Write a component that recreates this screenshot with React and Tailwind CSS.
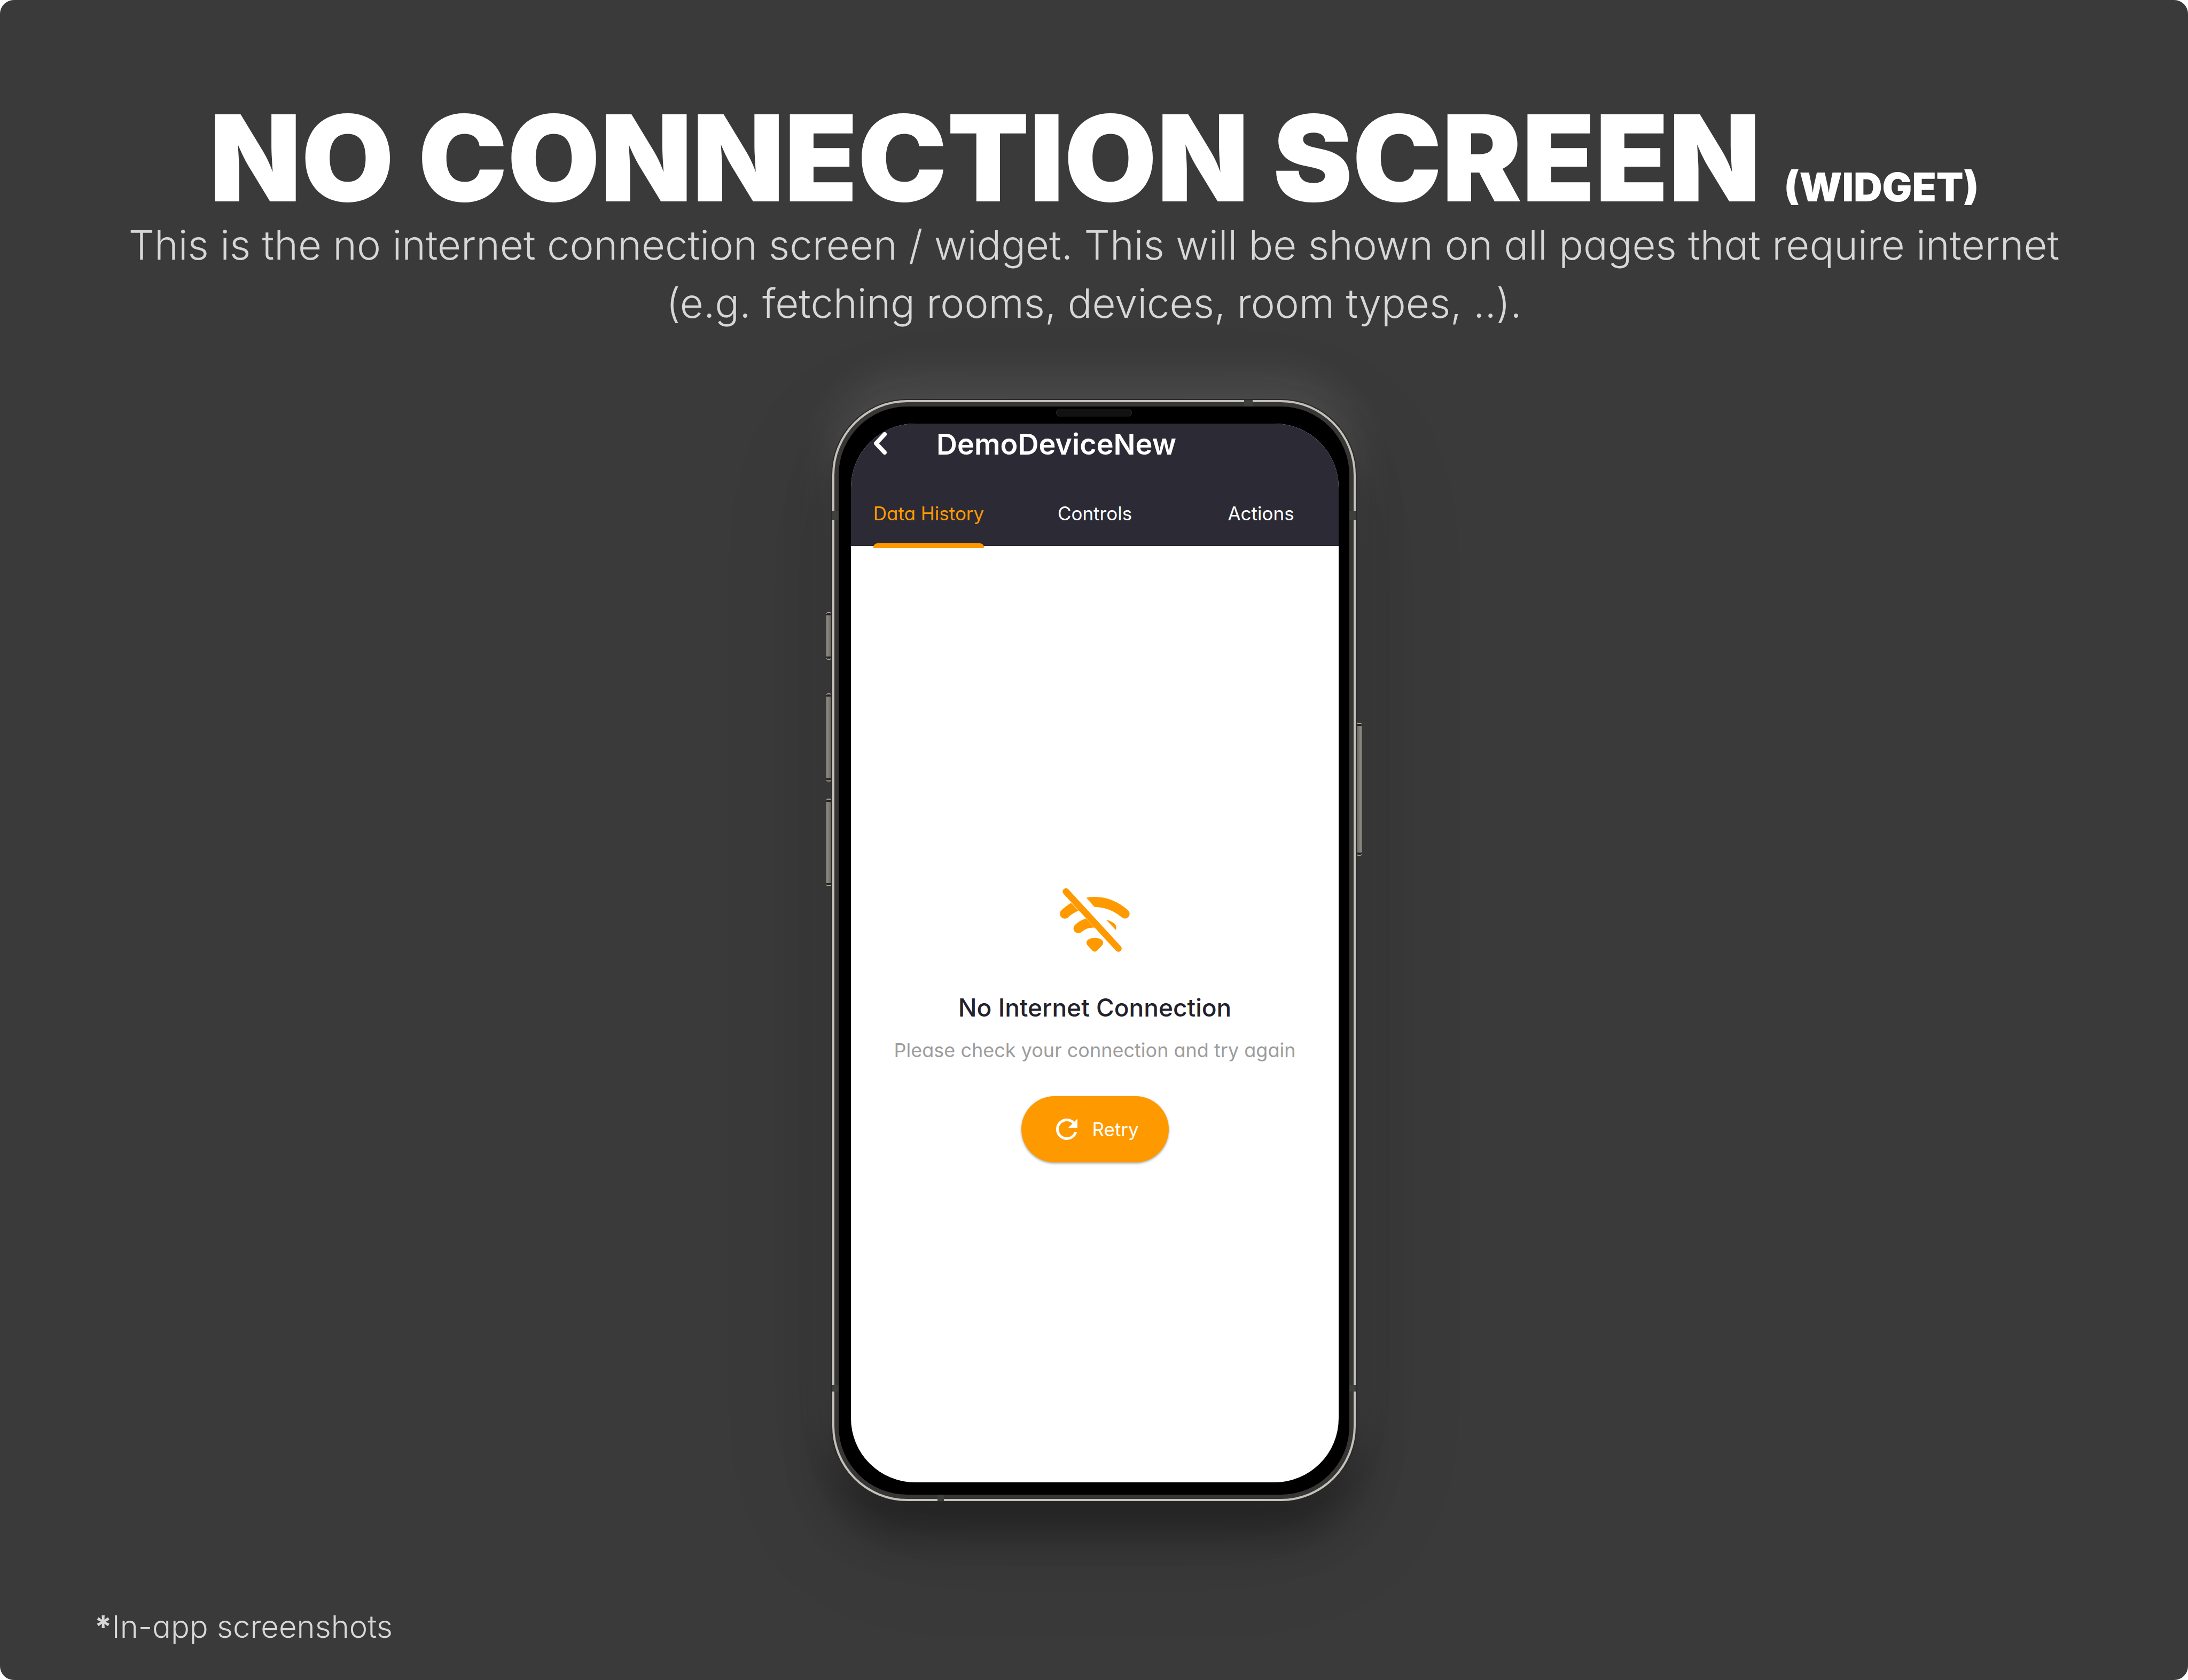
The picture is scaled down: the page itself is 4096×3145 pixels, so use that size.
const SIDE_BUTTONS = [
  { name: "mute", place: "-left-[11px] top-[399px] h-[85px] bg-gradient-to-r" },
  { name: "volume-up", place: "-left-[11px] top-[551px] h-[161px] bg-gradient-to-r" },
  { name: "volume-down", place: "-left-[11px] top-[748px] h-[160px] bg-gradient-to-r" },
  { name: "power", place: "-right-[11px] top-[606px] h-[245px] bg-gradient-to-l" },
];

const ANTENNA_GAPS = [
  { name: "left-top", place: "left-0 top-[208px] h-4 w-3" },
  { name: "right-top", place: "right-0 top-[208px] h-4 w-3" },
  { name: "left-bottom", place: "left-0 bottom-[205px] h-3 w-3" },
  { name: "right-bottom", place: "right-0 bottom-[205px] h-3 w-3" },
  { name: "top", place: "top-0 right-[193px] h-3 w-4" },
  { name: "bottom", place: "bottom-0 left-[197px] h-3 w-3" },
];

const TABS = ["Data History", "Controls", "Actions"];

function WifiOffIcon() {
  return (
    <svg viewBox="237 133 436 399" className="h-[120px] w-[131px]" fill="#ff9900" aria-hidden="true">
      <path d="M275 156L602 511" stroke="#ff9900" strokeWidth="41" strokeLinecap="round" />
      <path d="M308 228Q278 243 248 272A29 29 0 0 0 287 318Q318 289 355 275Z" />
      <path d="M402 194Q547 171 662 273A29 29 0 0 1 623 317Q548 254 453 252Z" />
      <path d="M400 324Q362 335 332 363A29 29 0 0 0 372 408Q405 379 455 381Z" />
      <path d="M525 331Q572 345 584 364Q594 382 585 395Z" />
      <path d="M403 475C404 454 428 445 455 445C482 445 506 454 507 475Q507 485 499 493L469 525Q455 537 441 525L411 493Q403 485 403 475Z" />
    </svg>
  );
}

function RefreshIcon() {
  return (
    <svg viewBox="0 0 24 24" className="size-15" fill="currentColor" aria-hidden="true">
      <path d="M17.65 6.35A7.96 7.96 0 0 0 12 4a8 8 0 1 0 7.73 10h-2.08A6 6 0 1 1 12 6c1.66 0 3.14.69 4.22 1.78L13 11h7V4z" />
    </svg>
  );
}

function Phone({ children }) {
  return (
    <div className="relative mx-auto w-[984px] rounded-[142px] border-2 border-[#2b2a26] bg-[#c2c1bc] p-1 shadow-[0_-40px_80px_rgba(255,255,255,0.1),0_60px_80px_rgba(0,0,0,0.35),0_60px_220px_rgba(0,0,0,0.12)]">
      {SIDE_BUTTONS.map((b) => (
        <span
          key={b.name}
          className={`absolute w-[9px] rounded-[3px] border-y-4 border-[#24231f] from-[#94928b] to-[#66645d] shadow-[0_-2px_0_#a9a8a0,0_2px_0_#a9a8a0] ${b.place}`}
        />
      ))}
      <div className="rounded-[136px] bg-[#373635] p-2">
        <div className="relative rounded-[128px] bg-black pt-8 pr-5 pb-[23px] pl-[23px]">
          <span className="absolute top-1 left-1/2 h-[15px] w-[142px] -translate-x-1/2 rounded-full border-x-2 border-[#242424] bg-[#121212]" />
          <div className="flex h-[1982px] flex-col overflow-hidden rounded-[120px] bg-white">{children}</div>
        </div>
      </div>
      {ANTENNA_GAPS.map((g) => (
        <span key={g.name} className={`absolute bg-[#3f3f3b] ${g.place}`} />
      ))}
    </div>
  );
}

export default function App() {
  return (
    <div className="bg-white">
      <main className="flex min-h-screen flex-col rounded-[26px] bg-[#3a3a3a] px-[177px] pt-[188px] pb-[60px] font-['Inter',sans-serif] text-[#d7d7d7] [font-feature-settings:'cv11']">
        <h1 className="text-center text-[224px] leading-[216px] font-black whitespace-nowrap text-white">
          NO CONNECTION SCREEN<span className="ml-[44px] text-[74px] leading-none">(WIDGET)</span>
        </h1>
        <p className="text-center text-[76px] leading-[109px] font-light">
          This is the no internet connection screen / widget. This will be shown on all pages that require internet
          <br />
          (e.g. fetching rooms, devices, room types, ..).
        </p>

        <div className="mt-[125px]">
          <Phone>
            <header className="h-[229px] shrink-0 bg-[#2b2a35] text-white">
              <div className="flex h-[78px] items-center pl-[41px]">
                <button type="button" aria-label="Back" className="w-[119px]">
                  <svg viewBox="0 0 28 46" className="h-[46px] w-7" fill="none" stroke="currentColor" strokeWidth="8" strokeLinecap="round" strokeLinejoin="round" aria-hidden="true">
                    <path d="M22 4L6 21L22 38" />
                  </svg>
                </button>
                <h2 className="text-[54px] leading-[78px] font-semibold">DemoDeviceNew</h2>
              </div>
              <nav role="tablist" className="-mx-[10px] mt-[62px] grid grid-cols-3 justify-items-center">
                {TABS.map((tab, i) => (
                  <button
                    key={tab}
                    type="button"
                    role="tab"
                    aria-selected={i === 0}
                    className="relative h-[93px] pb-[37px] text-[35px] leading-[56px] whitespace-nowrap aria-selected:text-[#ff9900]"
                  >
                    {tab}
                    {i === 0 && <span className="absolute inset-x-0 bottom-0 h-[9px] rounded-t-lg bg-[#ff9900]" />}
                  </button>
                ))}
              </nav>
            </header>
            <section className="flex grow flex-col items-center justify-center pt-[41px] text-center">
              <WifiOffIcon />
              <h3 className="mt-[72px] text-[46px] leading-[64px] font-medium text-[#22212c]">No Internet Connection</h3>
              <p className="mt-[20px] text-[36px] leading-[56px] text-[#9c9c9c]">Please check your connection and try again</p>
              <button
                type="button"
                className="mt-[58px] flex h-[124px] w-[276px] items-center gap-[18px] rounded-full bg-[#ff9900] pl-[55px] text-[35px] leading-[56px] text-white shadow-[0_2px_4px_rgba(0,0,0,0.35)]"
              >
                <RefreshIcon />
                Retry
              </button>
            </section>
          </Phone>
        </div>

        <p className="mt-auto text-[58px] leading-[80px] font-light">
          <span className="font-bold">*</span>In-app screenshots
        </p>
      </main>
    </div>
  );
}
